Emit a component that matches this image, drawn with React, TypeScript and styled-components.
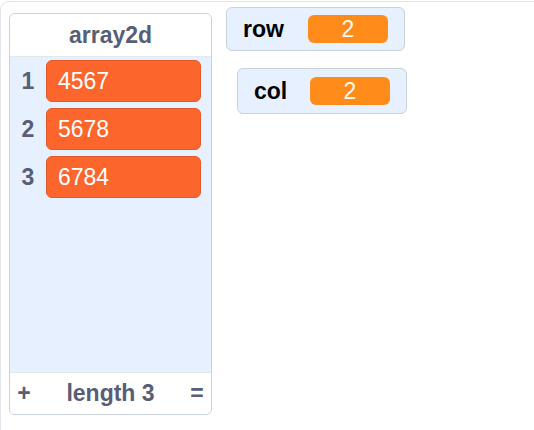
import React from 'react'
import styled, { createGlobalStyle } from 'styled-components'

const GlobalStyle = createGlobalStyle`
  html, body {
    margin: 0;
    padding: 0;
    background: #ffffff;
    overflow: hidden;
  }
  body {
    font-family: "Liberation Sans", Arial, Helvetica, sans-serif;
  }
`

type Pos = {
  x: number
  y: number
  w: number
  h: number
}

const Viewport = styled.div`
  width: 100vw;
  height: 100vh;
  overflow: hidden;
`

const Stage = styled.div`
  position: relative;
  margin-top: 1px;
  width: 620px;
  height: 470px;
  border: 1px solid #dfe3ea;
  border-radius: 9px;
  box-sizing: border-box;
  background: #ffffff;
`

const ListMonitor = styled.div<Pos>`
  position: absolute;
  left: ${({ x }) => x}px;
  top: ${({ y }) => y}px;
  width: ${({ w }) => w}px;
  height: ${({ h }) => h}px;
  box-sizing: border-box;
  border: 1px solid #c9d1dd;
  border-radius: 6px;
  overflow: hidden;
  display: flex;
  flex-direction: column;
  background: #e6f0ff;
`

const ListHeader = styled.div`
  height: 42px;
  flex: none;
  display: flex;
  align-items: center;
  justify-content: center;
  background: #ffffff;
  border-bottom: 1px solid #e3e8ef;
  color: #575e75;
  font-weight: bold;
  font-size: 23px;
`

const ListBody = styled.div`
  flex: 1;
  padding-top: 3px;
  display: flex;
  flex-direction: column;
  gap: 6px;
`

const ListRow = styled.div`
  display: flex;
  align-items: center;
  height: 42px;
  padding-right: 10px;
`

const RowIndex = styled.div`
  width: 36px;
  flex: none;
  text-align: center;
  color: #575e75;
  font-weight: bold;
  font-size: 23px;
`

const RowValue = styled.div`
  flex: 1;
  height: 42px;
  box-sizing: border-box;
  display: flex;
  align-items: center;
  padding-left: 11px;
  background: #fc662c;
  border: 1px solid #e0592a;
  border-radius: 6px;
  color: #ffffff;
  font-size: 23px;
`

const ListFooter = styled.div`
  height: 41px;
  flex: none;
  display: flex;
  align-items: center;
  justify-content: space-between;
  padding: 0 5px;
  background: #ffffff;
  border-top: 1px solid #e3e8ef;
  color: #575e75;
  font-weight: bold;
  font-size: 23px;
`

const FooterButton = styled.span`
  width: 18px;
  text-align: center;
`

const VarMonitor = styled.div<Pos>`
  position: absolute;
  left: ${({ x }) => x}px;
  top: ${({ y }) => y}px;
  width: ${({ w }) => w}px;
  height: ${({ h }) => h}px;
  box-sizing: border-box;
  border: 1px solid #c9d1dd;
  border-radius: 6px;
  background: #e6f0ff;
  display: flex;
  align-items: center;
  justify-content: space-between;
  padding: 0 16px;
`

const VarLabel = styled.span`
  color: #000000;
  font-weight: bold;
  font-size: 23px;
`

const VarValue = styled.span`
  width: 80px;
  height: 28px;
  border-radius: 6px;
  background: #ff8c1a;
  color: #fffaf0;
  font-size: 23px;
  display: flex;
  align-items: center;
  justify-content: center;
`

const items = ['4567', '5678', '6784']

const App = () => {
  return (
    <Viewport>
      <GlobalStyle />
      <Stage>
        <ListMonitor x={8} y={11} w={203} h={402}>
          <ListHeader>array2d</ListHeader>
          <ListBody>
            {items.map((item, i) => (
              <ListRow key={i}>
                <RowIndex>{i + 1}</RowIndex>
                <RowValue>{item}</RowValue>
              </ListRow>
            ))}
          </ListBody>
          <ListFooter>
            <FooterButton>+</FooterButton>
            <span>length {items.length}</span>
            <FooterButton>=</FooterButton>
          </ListFooter>
        </ListMonitor>
        <VarMonitor x={225} y={5} w={179} h={44}>
          <VarLabel>row</VarLabel>
          <VarValue>2</VarValue>
        </VarMonitor>
        <VarMonitor x={236} y={66} w={170} h={46}>
          <VarLabel>col</VarLabel>
          <VarValue>2</VarValue>
        </VarMonitor>
      </Stage>
    </Viewport>
  )
}

export default App
